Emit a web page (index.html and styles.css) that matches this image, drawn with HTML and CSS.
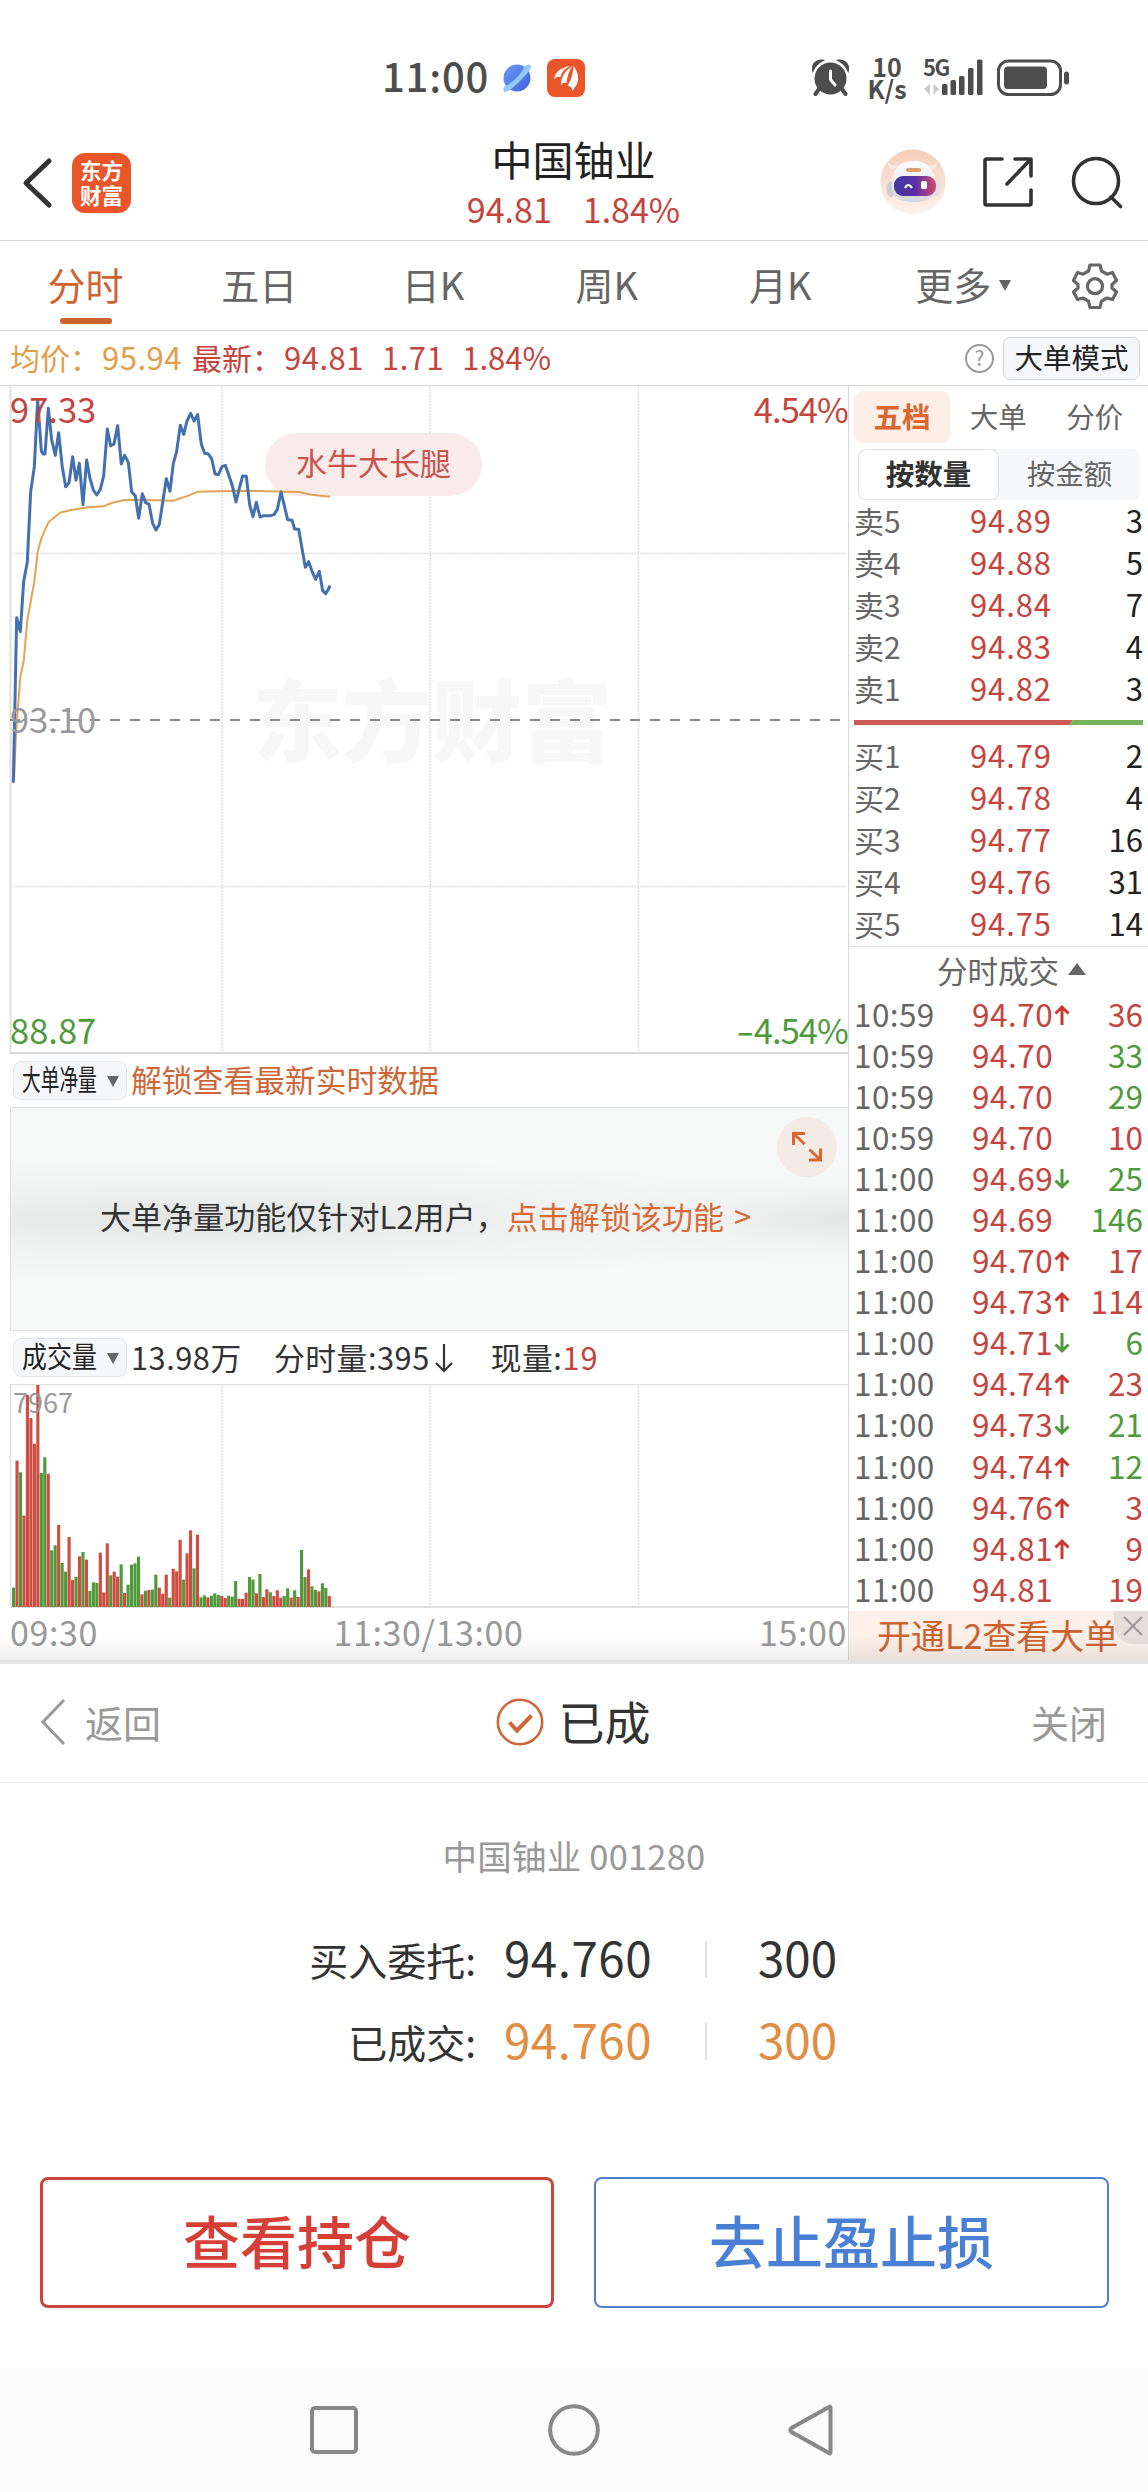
FILE: index.html
```html
<!DOCTYPE html>
<html lang="zh-CN">
<head>
<meta charset="utf-8">
<title>中国铀业 94.81</title>
<link rel="stylesheet" href="styles.css">
</head>
<body>
<div class="phone">

  <div class="status">
    <div class="status-left">
      <span class="clock">11:00</span>
      <svg class="planet" width="30" height="30" viewBox="0 0 30 30">
        <defs><linearGradient id="pl" x1="0" y1="0" x2="1" y2="1"><stop offset="0" stop-color="#6f9cf8"/><stop offset="1" stop-color="#3c5fd8"/></linearGradient></defs>
        <circle cx="15" cy="15" r="13.500" fill="url(#pl)"/>
        <path d="M22 3.500C27 .5 30 1 28.500 5C26 11 11 26 5 28.600C1 30 0 26.500 3 23C10 20 21 10 22 3.500Z" fill="#93c8fa"/>
      </svg>
      <svg class="app" width="38" height="38" viewBox="0 0 38 38">
        <rect width="38" height="38" rx="8" fill="#ea5529"/>
        <g fill="#fff"><path d="M7 20Q8 10 23 7Q14 12 13.500 18Q10 17 7 20Z"/><path d="M14 26Q13.500 15 25 7Q20 16 19.500 24Q16 23 14 26Z"/><path d="M20.500 27Q26 18 26.500 7Q33.500 16 30 25L25.500 32Q25 27 20.500 27Z"/></g>
      </svg>
    </div>
    <div class="status-right">
      <svg width="37" height="37" viewBox="0 0 37 37" fill="#4d4d4d">
        <circle cx="18.500" cy="19.500" r="16"/>
        <path d="M1 11A8 8 0 0 1 10 1.500Q4 4.500 1 11ZM36 11A8 8 0 0 0 27 1.500Q33 4.500 36 11Z" stroke="#4d4d4d" stroke-width="2"/>
        <path d="M7 30L3.500 35M30 30L33.500 35" stroke="#4d4d4d" stroke-width="4" stroke-linecap="round"/>
        <path d="M18.500 12V20.500L23 26" fill="none" stroke="#fff" stroke-width="3" stroke-linecap="round"/>
      </svg>
      <div class="speed"><span>10</span><span>K/s</span></div>
      <svg class="signal" width="60" height="37" viewBox="924 59 60 37" fill="#4d4d4d">
        <rect x="942" y="84" width="5.500" height="11" rx="1.500"/><rect x="950.500" y="80" width="5.500" height="15" rx="1.500"/><rect x="959" y="76" width="5.500" height="19" rx="1.500"/><rect x="968" y="68" width="5.500" height="27" rx="1.500"/><rect x="977" y="59.500" width="5.500" height="35.500" rx="1.500"/>
        <path d="M924 89L930 83.500V95ZM939 89L933.500 83.500V95Z" fill="#ccc"/>
        <text x="923" y="76" class="net">5G</text>
      </svg>
      <svg class="battery" width="74" height="37" viewBox="0 0 74 37">
        <rect x="1.500" y="2" width="62" height="33.500" rx="10" fill="none" stroke="#4d4d4d" stroke-width="3"/>
        <rect x="7" y="7.500" width="43" height="22.500" rx="4" fill="#4d4d4d"/>
        <rect x="67" y="12.500" width="5" height="13" rx="2.500" fill="#4d4d4d"/>
      </svg>
    </div>
  </div>

  <header class="header">
    <div class="header-left">
      <svg width="32" height="52" viewBox="0 0 32 52"><path d="M28 4L5 26L28 48" fill="none" stroke="#333" stroke-width="5" stroke-linecap="round" stroke-linejoin="round"/></svg>
      <div class="logo"><span>东方</span><span>财富</span></div>
    </div>
    <div class="title">
      <h1>中国铀业</h1>
      <p><span>94.81</span><span>1.84%</span></p>
    </div>
    <div class="header-right">
      <svg width="66" height="66" viewBox="0 0 66 66">
        <defs>
          <linearGradient id="peach" x1="0" y1="0" x2="0" y2="1"><stop offset="0" stop-color="#f7cdb8"/><stop offset="1" stop-color="#fdf3ee"/></linearGradient>
          <linearGradient id="visor"><stop offset="0" stop-color="#42389f"/><stop offset=".5" stop-color="#5a2fa6"/><stop offset="1" stop-color="#d8496a"/></linearGradient>
          <linearGradient id="shell" x1="0" y1="0" x2="0" y2="1"><stop offset="0" stop-color="#fff"/><stop offset="1" stop-color="#d9d6dc"/></linearGradient>
        </defs>
        <circle cx="33" cy="33" r="32.500" fill="url(#peach)"/>
        <path d="M14 21Q7 20 8 13Q12 18 18 16ZM50 21Q58 20 57 13Q53 18 47 16Z" fill="#f6e9e6"/>
        <ellipse cx="11" cy="40" rx="4.500" ry="8" fill="#cfcdd3"/><ellipse cx="56" cy="39" rx="4.500" ry="8" fill="#e4dfe3"/>
        <path d="M12 36C12 20 19 12 33 12C47 12 55 19 56 36C56 48 50 53 34 53C18 53 12 48 12 36Z" fill="url(#shell)"/>
        <rect x="26" y="19" width="15" height="4" rx="2" fill="#dca06e"/>
        <rect x="14" y="27" width="42" height="20" rx="9" fill="url(#visor)"/>
        <path d="M25 39Q28 33 32 39" fill="none" stroke="#fff" stroke-width="2.200"/><rect x="41" y="32" width="6" height="8" rx="2" fill="#fff"/>
      </svg>
      <svg width="52" height="52" viewBox="0 0 52 52" fill="none" stroke="#333" stroke-width="3.600" stroke-linecap="round" stroke-linejoin="round"><path d="M20 3H4.500Q3 3 3 4.500V47.500Q3 49 4.500 49H47.500Q49 49 49 47.500V34M33 3H49V20M48 4L25 28"/></svg>
      <svg width="53" height="53" viewBox="0 0 53 53" fill="none" stroke="#333" stroke-width="3.600" stroke-linecap="round"><circle cx="25" cy="25" r="22.500"/><path d="M40 41L49.500 50.500"/></svg>
    </div>
  </header>

  <nav class="tabs">
    <span class="tab on">分时</span><span class="tab">五日</span><span class="tab">日K</span><span class="tab">周K</span><span class="tab">月K</span><span class="tab more">更多</span>
    <span class="gear"><svg width="46" height="46" viewBox="0 0 46 46" fill="none" stroke="#666" stroke-width="3.200" stroke-linejoin="round"><path d="M18 2H28L29.500 8L35 11.200L40.500 9.500L44.500 17.500L40 21.500V25L44.500 29L40.500 36.500L35 35L29.500 38.200L28 44.500H18L16.500 38.200L11 35L5.500 36.500L1.500 29L6 25V21.500L1.500 17.500L5.500 9.500L11 11.200L16.500 8Z"/><circle cx="23" cy="23.200" r="7.500"/></svg></span>
  </nav>

  <div class="info">
    <span class="avg">均价：<b>95.94</b></span><span class="last">最新：<b>94.81</b><b>1.71</b><b class="pct">1.84%</b></span>
    <svg class="help" width="31" height="31" viewBox="0 0 31 31"><circle cx="15.500" cy="15.500" r="13.500" fill="none" stroke="#999" stroke-width="2"/><text x="15.500" y="23" text-anchor="middle">?</text></svg>
    <span class="mode">大单模式</span>
  </div>

  <main class="main">
    <section class="charts">
      <div class="price-chart">
        <svg width="848" height="668" viewBox="0 386 848 668">
          <text class="watermark" x="252" y="755">东方财富</text>
          <g fill="none" stroke="#e0e0e0" stroke-width="1.500" stroke-dasharray="2 1"><path d="M222 386V1053M430 386V1053M638.500 386V1053M10 553.500H847M10 886.500H847"/></g>
          <path d="M10.500 386V1053" stroke="#e0e0e0" stroke-width="2"/>
          <path d="M10 1053H848" stroke="#d6d6d6" stroke-width="2"/>
          <path d="M10 720H847" stroke="#888" stroke-width="2" stroke-dasharray="10 10"/>
          <rect x="265" y="433" width="217" height="63" rx="31.500" fill="#faebeb"/>
          <g transform="translate(0 380) scale(.33333)" fill="none" stroke-linejoin="round">
            <path stroke="#e2a356" stroke-width="6" d="M42 1200L48 1060L61 890L71 844L82 720L103 605L113 515L124 475L145 427L180 398L210 391L265 382L310 379L335 369L370 361L400 359L440 360L520 362L565 347L593 335L720 332L895 336L935 344L990 350"/>
            <path stroke="#4470b0" stroke-width="9" d="M40 1208L50 713L61 755L71 605L82 545L92 335L103 260L113 60L124 213L129 222L135 222L145 85L155 180L166 226L176 158L187 262L197 320L207 308L218 230L228 301L238 250L249 374L260 240L270 296L280 330L290 345L301 328L311 288L322 147L332 198L342 192L353 137L364 252L374 226L385 247L395 335L406 348L416 415L427 341L437 368L447 373L458 430L468 450L478 433L489 361L499 296L510 334L520 250L530 214L541 136L551 163L561 123L572 100L582 123L593 104L604 193L614 220L624 221L635 236L645 282L655 284L666 260L676 256L687 287L697 317L708 366L718 325L728 288L739 289L749 375L759 410L769 367L780 411L791 407L812 407L822 404L832 388L843 336L863 419L876 421L884 447L896 448L916 562L926 545L936 574L947 598L958 574L968 632L977 641L984 630L990 617"/>
          </g>
        </svg>
        <span class="lbl tl red">97.33</span>
        <span class="lbl tr red">4.54%</span>
        <span class="lbl ml">93.10</span>
        <span class="lbl bl green">88.87</span>
        <span class="lbl br green"><i>-</i>4.54%</span>
        <span class="pill">水牛大长腿</span>
      </div>

      <div class="bar-row">
        <span class="chip"><em class="w4">大单净量</em></span>
        <span class="orange">解锁查看最新实时数据</span>
      </div>
      <div class="locked">
        <p>大单净量功能仅针对L2用户，<span>点击解锁该功能 &gt;</span></p>
        <span class="expand"><svg width="32" height="32" viewBox="0 0 32 32" fill="none" stroke="#d9682f" stroke-width="3"><path d="M2.500 14V2.500H14M3 3L13.500 13M29.500 17.500V29H18M29 28.500L18.500 18.500"/></svg></span>
      </div>
      <div class="bar-row">
        <span class="chip"><em class="w3">成交量</em></span>
        <span class="stat s1">13.98万</span><span class="stat s2">分时量:395</span>
        <svg class="down" width="20" height="30" viewBox="0 0 20 30"><path d="M10 1V27M2 20L10 28L18 20" fill="none" stroke="#333" stroke-width="2.200"/></svg>
        <span class="stat s3">现量:<b>19</b></span>
      </div>
      <div class="volume">
        <svg width="848" height="224" viewBox="0 1384 848 224">
          <path d="M222 1384V1607M430 1384V1607M638.500 1384V1607" stroke="#e0e0e0" stroke-width="1.500" stroke-dasharray="2 1"/>
          <path d="M10.500 1607V1384.500H848" fill="none" stroke="#e0e0e0" stroke-width="1.500"/>
          <path d="M10 1607H848" stroke="#dedede" stroke-width="2"/>
          <g id="bars" transform="translate(0 1370) scale(.33333)"></g>
        </svg>
        <span class="vol-max">7967</span>
      </div>
      <div class="axis"><span>09:30</span><span>11:30/13:00</span><span>15:00</span></div>
    </section>

    <aside class="side">
      <div class="side-tabs"><span class="on">五档</span><span>大单</span><span>分价</span></div>
      <div class="toggle"><span class="on">按数量</span><span>按金额</span></div>
      <div class="book">
        <div><span>卖5</span><b>94.89</b><i>3</i></div>
        <div><span>卖4</span><b>94.88</b><i>5</i></div>
        <div><span>卖3</span><b>94.84</b><i>7</i></div>
        <div><span>卖2</span><b>94.83</b><i>4</i></div>
        <div><span>卖1</span><b>94.82</b><i>3</i></div>
      </div>
      <svg class="ratio" width="289" height="5" viewBox="0 0 289 5"><path d="M0 0H219L215 5H0Z" fill="#cb5a55"/><path d="M219 0H289V5H215Z" fill="#75b35c"/></svg>
      <div class="book buys">
        <div><span>买1</span><b>94.79</b><i>2</i></div>
        <div><span>买2</span><b>94.78</b><i>4</i></div>
        <div><span>买3</span><b>94.77</b><i>16</i></div>
        <div><span>买4</span><b>94.76</b><i>31</i></div>
        <div><span>买5</span><b>94.75</b><i>14</i></div>
      </div>
      <div class="deals-head">分时成交<i></i></div>
      <div class="deals" id="deals"></div>
      <div class="promo">开通L2查看大单
        <span class="promo-x"><svg width="20" height="20" viewBox="0 0 20 20"><path d="M1 1L19 19M19 1L1 19" stroke="#999" stroke-width="2"/></svg></span>
      </div>
    </aside>
    <span class="shade"></span>
  </main>

  <section class="sheet">
    <div class="sheet-head">
      <span class="back"><svg width="28" height="48" viewBox="0 0 28 48"><path d="M25 2L4 24L25 46" fill="none" stroke="#999" stroke-width="3"/></svg>返回</span>
      <span class="done"><svg width="48" height="48" viewBox="0 0 48 48" fill="none" stroke="#cd6738"><circle cx="24" cy="24" r="22.200" stroke-width="2.600"/><path d="M13.500 24.500L21 32.500L35.500 17.500" stroke-width="4"/></svg><em>已成</em></span>
      <span class="close">关闭</span>
    </div>
    <p class="stock">中国铀业 001280</p>
    <div class="order"><span>买入委托:</span><b>94.760</b><b class="qty">300</b></div>
    <div class="order filled"><span>已成交:</span><b>94.760</b><b class="qty">300</b></div>
    <div class="actions"><button class="view">查看持仓</button><button class="stop">去止盈止损</button></div>
  </section>

  <footer class="nav">
    <svg width="48" height="48" viewBox="0 0 48 48"><rect x="2" y="2" width="44" height="44" rx="3"/></svg>
    <svg width="52" height="52" viewBox="0 0 52 52"><circle cx="26" cy="26" r="23.800"/></svg>
    <svg width="48" height="52" viewBox="0 0 48 52"><path d="M43.500 3.500V48.500Q43.500 50 42 49L4.500 28Q2 26 4.500 24L42 3Q43.500 2 43.500 3.500Z"/></svg>
  </footer>
</div>
<script src="app.js"></script>
</body>
</html>
```
FILE: styles.css
```css
* { box-sizing: border-box; }
body { margin: 0; background: #fff; font-family: "Noto Sans CJK SC", sans-serif; color: #333; }
b, i, em { font-weight: inherit; font-style: normal; }
p, h1 { margin: 0; font-weight: 400; }
svg { display: block; flex: none; }
.phone { width: 1148px; height: 2492px; display: flex; flex-direction: column; overflow: hidden; }
.phone > * { flex: none; }
span, b, i, h1 { white-space: nowrap; }

.status { height: 120px; display: flex; justify-content: space-between; padding: 59px 77px 0 382px; line-height: 38px; color: #4d4d4d; }
.status-left, .status-right { display: flex; align-items: flex-start; }
.clock { font-size: 40px; font-weight: 500; line-height: 33px; width: 120px; letter-spacing: .8px; }
.planet { margin: 4px 15px 0 0; }
.speed { display: flex; flex-direction: column; align-items: center; font-size: 25px; font-weight: 700; line-height: 22px; width: 60px; margin: -4px 7px 0 8px; }
.speed span { height: 21.500px; }
.signal { margin-right: 13px; overflow: visible; }
.net { font-size: 22px; font-weight: 700; letter-spacing: -1.500px; }

.header { height: 121px; border-bottom: 1.500px solid #d8d8d8; display: grid; grid-template-columns: 1fr 300px 1fr; }
.header-left { display: flex; align-items: center; padding: 6px 0 0 21px; gap: 19px; }
.logo { width: 59px; height: 60px; border-radius: 13px; background: #ea5529; color: #fff; display: flex; flex-direction: column; align-items: center; padding-top: 4px; font-size: 21.500px; font-weight: 700; line-height: 25px; }
.title { text-align: center; }
.title h1 { font-size: 41px; line-height: 60px; color: #222; padding-top: 8px; margin-right: 1px; }
.title p { font-size: 34px; line-height: 40px; color: #c3453e; display: flex; justify-content: center; gap: 31px; margin: 1px 1px 0 0; }
.header-right { display: flex; align-items: center; justify-content: flex-end; padding: 4px 24px 0 0; gap: 36px; }
.header-right svg:last-child { margin-left: 1px; }

.tabs { height: 90px; border-bottom: 1.500px solid #d8d8d8; display: grid; grid-template-columns: repeat(6, 173.700px) 1fr; font-size: 38px; color: #666; text-align: center; }
.tab { line-height: 86px; position: relative; padding-right: 2.500px; }
.tab.on { color: #cd6331; }
.tab.on::after { content: ""; position: absolute; left: 60px; top: 77px; width: 52px; height: 6px; border-radius: 3px; background: #cd6331; }
.tab.more { padding-right: 4px; }
.more::after { content: ""; position: absolute; left: 131px; top: 39px; border: 6.500px solid transparent; border-top: 11px solid #666; border-bottom: 0; }
.gear { display: flex; align-items: center; justify-content: center; padding-right: 1px; }

.info { height: 55px; border-bottom: 1.500px solid #d8d8d8; display: flex; align-items: center; padding: 0 8px 2px 10px; font-size: 30px; line-height: 48px; }
.info b { font-size: 31px; letter-spacing: .500px; }
.avg { color: #e0a04a; width: 182px; }
.avg b, .last b { margin-left: 2px; }
.last { color: #c3453e; }
.last b + b { margin-left: 18px; }
.last .pct { letter-spacing: 0; }
.help { margin: 2px 8px 0 auto; }
.help text { font-size: 21px; fill: #999; }
.mode { width: 137px; height: 43px; border: 1.500px solid #d2d3d6; border-radius: 7px; background: #f6f7fb; color: #222; font-size: 28.500px; line-height: 37px; text-align: center; margin-top: 2px; }

.main { height: 1274px; display: grid; grid-template-columns: 848px 300px; position: relative; overflow: hidden; }
.charts { display: flex; flex-direction: column; }
.price-chart { position: relative; height: 668px; }
.watermark { font-size: 90px; font-weight: 900; fill: #f7f7f7; }
.lbl { position: absolute; font-size: 34.500px; line-height: 40px; color: #999; }
.red { color: #c3453e; } .green { color: #4f9a3c; }
.tl { left: 10px; top: 2px; } .tr { right: 0; top: 2px; letter-spacing: -.900px; }
.ml { left: 10px; top: 312px; } .bl { left: 10px; top: 623px; } .br { right: 0; top: 623px; letter-spacing: -.900px; }
.br i { display: inline-block; transform: scaleX(1.500); margin-right: 4px; }
.pill { position: absolute; left: 265px; top: 47px; width: 217px; height: 63px; line-height: 58px; text-align: center; font-size: 31px; color: #c9534d; }
.bar-row { height: 53px; display: flex; align-items: center; padding-left: 13px; font-size: 30.800px; line-height: 47px; }
.chip { width: 114px; height: 39px; border: 1.500px solid #e2e4ec; border-radius: 8px; background: #f6f7fb; margin-right: 4px; padding-left: 8px; font-size: 29px; line-height: 33px; position: relative; color: #222; flex: none; }
.chip em { display: inline-block; transform-origin: 0 50%; }
.chip .w4 { transform: scaleX(.645); } .chip .w3 { transform: scaleX(.860); }
.chip::after { content: ""; position: absolute; right: 7px; top: 14px; border: 6.500px solid transparent; border-top: 11px solid #666; border-bottom: 0; }
.orange { color: #cd6738; padding-bottom: 5px; }
.locked { height: 224px; margin-left: 10px; border: 1.500px solid #dedfe0; border-right: 0; position: relative; background: radial-gradient(ellipse 720px 62px at 24% 50%, #e3e4e4 0, rgba(236,237,237,.7) 45%, rgba(247,248,248,0) 100%), radial-gradient(ellipse 260px 52px at 100% 50%, #e2e4e4 0, rgba(240,241,241,.5) 55%, rgba(247,248,248,0) 100%), #f7f8f8; }
.locked p { padding-left: 89px; font-size: 31px; line-height: 216px; white-space: nowrap; letter-spacing: .050px; word-spacing: 3px; }
.locked p span { color: #d96a36; }
.expand { position: absolute; right: 11px; top: 9px; width: 60px; height: 60px; border-radius: 50%; background: #f5ebe6; display: flex; align-items: center; justify-content: center; }
.stat { padding-bottom: 3px; color: #333; letter-spacing: .500px; }
.s1 { width: 143px; } .s2 { margin-right: 4px; } .s3 { margin-left: 37px; } .s3 b { color: #c3453e; letter-spacing: 1px; }
.volume { height: 224px; position: relative; }
.vol-max { position: absolute; left: 13px; top: -2px; font-size: 27px; line-height: 40px; color: #999; }
.axis { height: 52px; display: grid; grid-template-columns: 1fr auto 1fr; padding: 0 1px 4px 10px; font-size: 34px; line-height: 47px; letter-spacing: .600px; color: #999; }
.axis span:nth-child(3) { text-align: right; }

.side { border-left: 1.500px solid #d8d8d8; }
.side-tabs { display: grid; grid-template-columns: 96px 1fr 1fr; padding: 5px 5px 0 5px; height: 57px; text-align: center; font-size: 28.500px; line-height: 49px; color: #666; }
.side-tabs span { height: 52px; }
.side-tabs .on { background: #fdeee6; border-radius: 8px; color: #dc6630; font-weight: 700; }
.toggle { margin: 5.500px 8px 0 9px; height: 51.500px; background: #f6f7fb; border-radius: 8px; display: grid; grid-template-columns: 141px 1fr; font-size: 28.500px; line-height: 48px; text-align: center; color: #666; }
.toggle .on { background: #fff; border: 1.500px solid #dfe0e4; border-radius: 8px; color: #333; font-weight: 700; line-height: 45px; }
.book { padding: 1px 5px 0 5px; }
.book div { height: 42px; display: grid; grid-template-columns: 116px 1fr 60px; font-size: 30px; line-height: 38px; color: #666; }
.book b { font-size: 31px; letter-spacing: .900px; color: #c3453e; }
.book i { font-size: 31px; color: #222; text-align: right; }
.ratio { margin: 9px 0 10px 5px; }
.buys { border-bottom: 1.500px solid #e2e2e2; }
.deals-head { height: 48px; display: flex; align-items: center; padding: 0 0 0 88px; font-size: 30.500px; line-height: 44px; color: #666; padding-bottom: 2px; }
.deals-head i { margin: 0 0 2px 9px; border: 9px solid transparent; border-bottom: 12px solid #666; border-top: 0; }
.deals { padding: 0 5px 0 5px; }
.deals div { height: 41.050px; display: grid; grid-template-columns: 118px 82px 20px 1fr; align-items: center; font-size: 31.500px; line-height: 37px; color: #666; padding-bottom: 4px; }
.deals span { letter-spacing: .400px; }
.deals b { letter-spacing: .500px; color: #c3453e; }
.deals i { text-align: right; }
.deals svg { margin-top: 3px; }
.deals .r { color: #c3453e; } .deals .g { color: #4f9a3c; }
.promo { height: 56px; background: #fcf0e9; color: #cd6331; font-size: 34px; line-height: 47px; padding-left: 28px; position: relative; white-space: nowrap; }
.promo-x { position: absolute; right: 0; top: 0; width: 34px; height: 33px; background: #e5dedb; border-bottom-left-radius: 20px; padding: 5px 0 0 9px; }
.shade { position: absolute; left: 0; right: 0; bottom: 0; height: 24px; background: linear-gradient(rgba(0,0,0,0), rgba(0,0,0,.07)); }

.sheet { height: 708px; background: #fefefe; border-top: 4px solid #e4e4e4; }
.sheet-head { height: 119px; border-bottom: 1.500px solid #ebebeb; display: grid; grid-template-columns: 1fr auto 1fr; align-items: center; padding: 0 41px 3px 39px; font-size: 38px; line-height: 60px; color: #999; }
.back, .done { display: flex; align-items: center; }
.back { gap: 18px; } .done { gap: 15px; font-size: 46px; color: #333; }
.done em { margin-top: -3px; }
.close { text-align: right; }
.stock { text-align: center; font-size: 34.500px; letter-spacing: .200px; line-height: 50px; color: #999; padding-top: 47px; height: 136px; }
.order { height: 82px; display: grid; grid-template-columns: 476px 229px auto; align-items: center; font-size: 39px; line-height: 70px; }
.order span { text-align: right; margin-top: -3px; }
.order b { font-size: 47.500px; padding-left: 28px; margin-top: -6px; letter-spacing: .500px; }
.order .qty { position: relative; padding-left: 53px; letter-spacing: 0; }
.order .qty::before { content: ""; position: absolute; left: 0; top: 19px; width: 1.500px; height: 37px; background: #e2e2e2; }
.filled b { color: #e08f42; }
.actions { display: grid; grid-template-columns: 514px 515px; gap: 40px; padding: 94px 40px 0; }
button { height: 131px; background: #fff; border-radius: 8px; font: 500 57px/100px "Noto Sans CJK SC", sans-serif; padding: 0 0 7px; }
.view { border: 3px solid #cb453d; color: #d63f35; }
.stop { border: 2px solid #4f80cb; color: #4a7fd6; }

.nav { height: 124px; background: #fbfbfb; display: flex; align-items: flex-start; padding: 36px 0 0 310px; }
.nav svg { fill: none; stroke: #888; stroke-width: 4; }
.nav svg:nth-child(1) { margin: 2px 190px 0 0; }
.nav svg:nth-child(2) { margin-right: 187px; }
```
FILE: app.js
```js
// One entry per trading minute: top edge of the bar and its colour.
const tops = '653g 272r 307g 437r 75r 144r 221r 45r 309g 262g 311r 541g 526g 465r 579g 605g 501r 630r 620g 559r 546g 569r 663g 637g 639g 548r 667r 520r 616g 605r 620r 583g 669r 644g 584g 580g 560g 673r 662g 660r 659g 614g 653r 671r 614r 683g 596r 604r 509r 629g 550r 481r 595g 494r 682g 676g 682r 677g 670g 675g 678r 684r 677g 680g 633g 686r 687r 668r 621g 629g 670r 612g 681r 658r 667g 678r 661r 683r 678g 655g 683r 661g 681r 540g 621g 598r 649g 660g 664r 640g 654g 678r'.split(' ');
document.getElementById('bars').innerHTML = tops.map((t, i) => {
  const top = parseInt(t, 10);
  const fill = t.endsWith('r') ? '#cf4c43' : '#509a3b';
  return `<rect x="${(36 + i * 10.41).toFixed(1)}" y="${top}" width="9.4" height="${711 - top}" fill="${fill}"/>`;
}).join('');

// time, price, tick direction, volume, volume colour
const deals = [
  ['10:59', '94.70', 'u', 36, 'r'], ['10:59', '94.70', '', 33, 'g'], ['10:59', '94.70', '', 29, 'g'],
  ['10:59', '94.70', '', 10, 'r'], ['11:00', '94.69', 'd', 25, 'g'], ['11:00', '94.69', '', 146, 'g'],
  ['11:00', '94.70', 'u', 17, 'r'], ['11:00', '94.73', 'u', 114, 'r'], ['11:00', '94.71', 'd', 6, 'g'],
  ['11:00', '94.74', 'u', 23, 'r'], ['11:00', '94.73', 'd', 21, 'g'], ['11:00', '94.74', 'u', 12, 'g'],
  ['11:00', '94.76', 'u', 3, 'r'], ['11:00', '94.81', 'u', 9, 'r'], ['11:00', '94.81', '', 19, 'r']
];
const arrow = {
  u: '<svg width="16" height="22" viewBox="0 0 16 22"><path d="M8 21V3M1.500 9.500L8 3L14.500 9.500" fill="none" stroke="#c9392f" stroke-width="3"/></svg>',
  d: '<svg width="16" height="22" viewBox="0 0 16 22"><path d="M8 1V19M1.500 12.500L8 19L14.500 12.500" fill="none" stroke="#4f9a3c" stroke-width="3"/></svg>',
  '': '<em></em>'
};
document.getElementById('deals').innerHTML = deals.map(([t, p, dir, v, c]) =>
  `<div><span>${t}</span><b>${p}</b>${arrow[dir]}<i class="${c}">${v}</i></div>`).join('');
```
